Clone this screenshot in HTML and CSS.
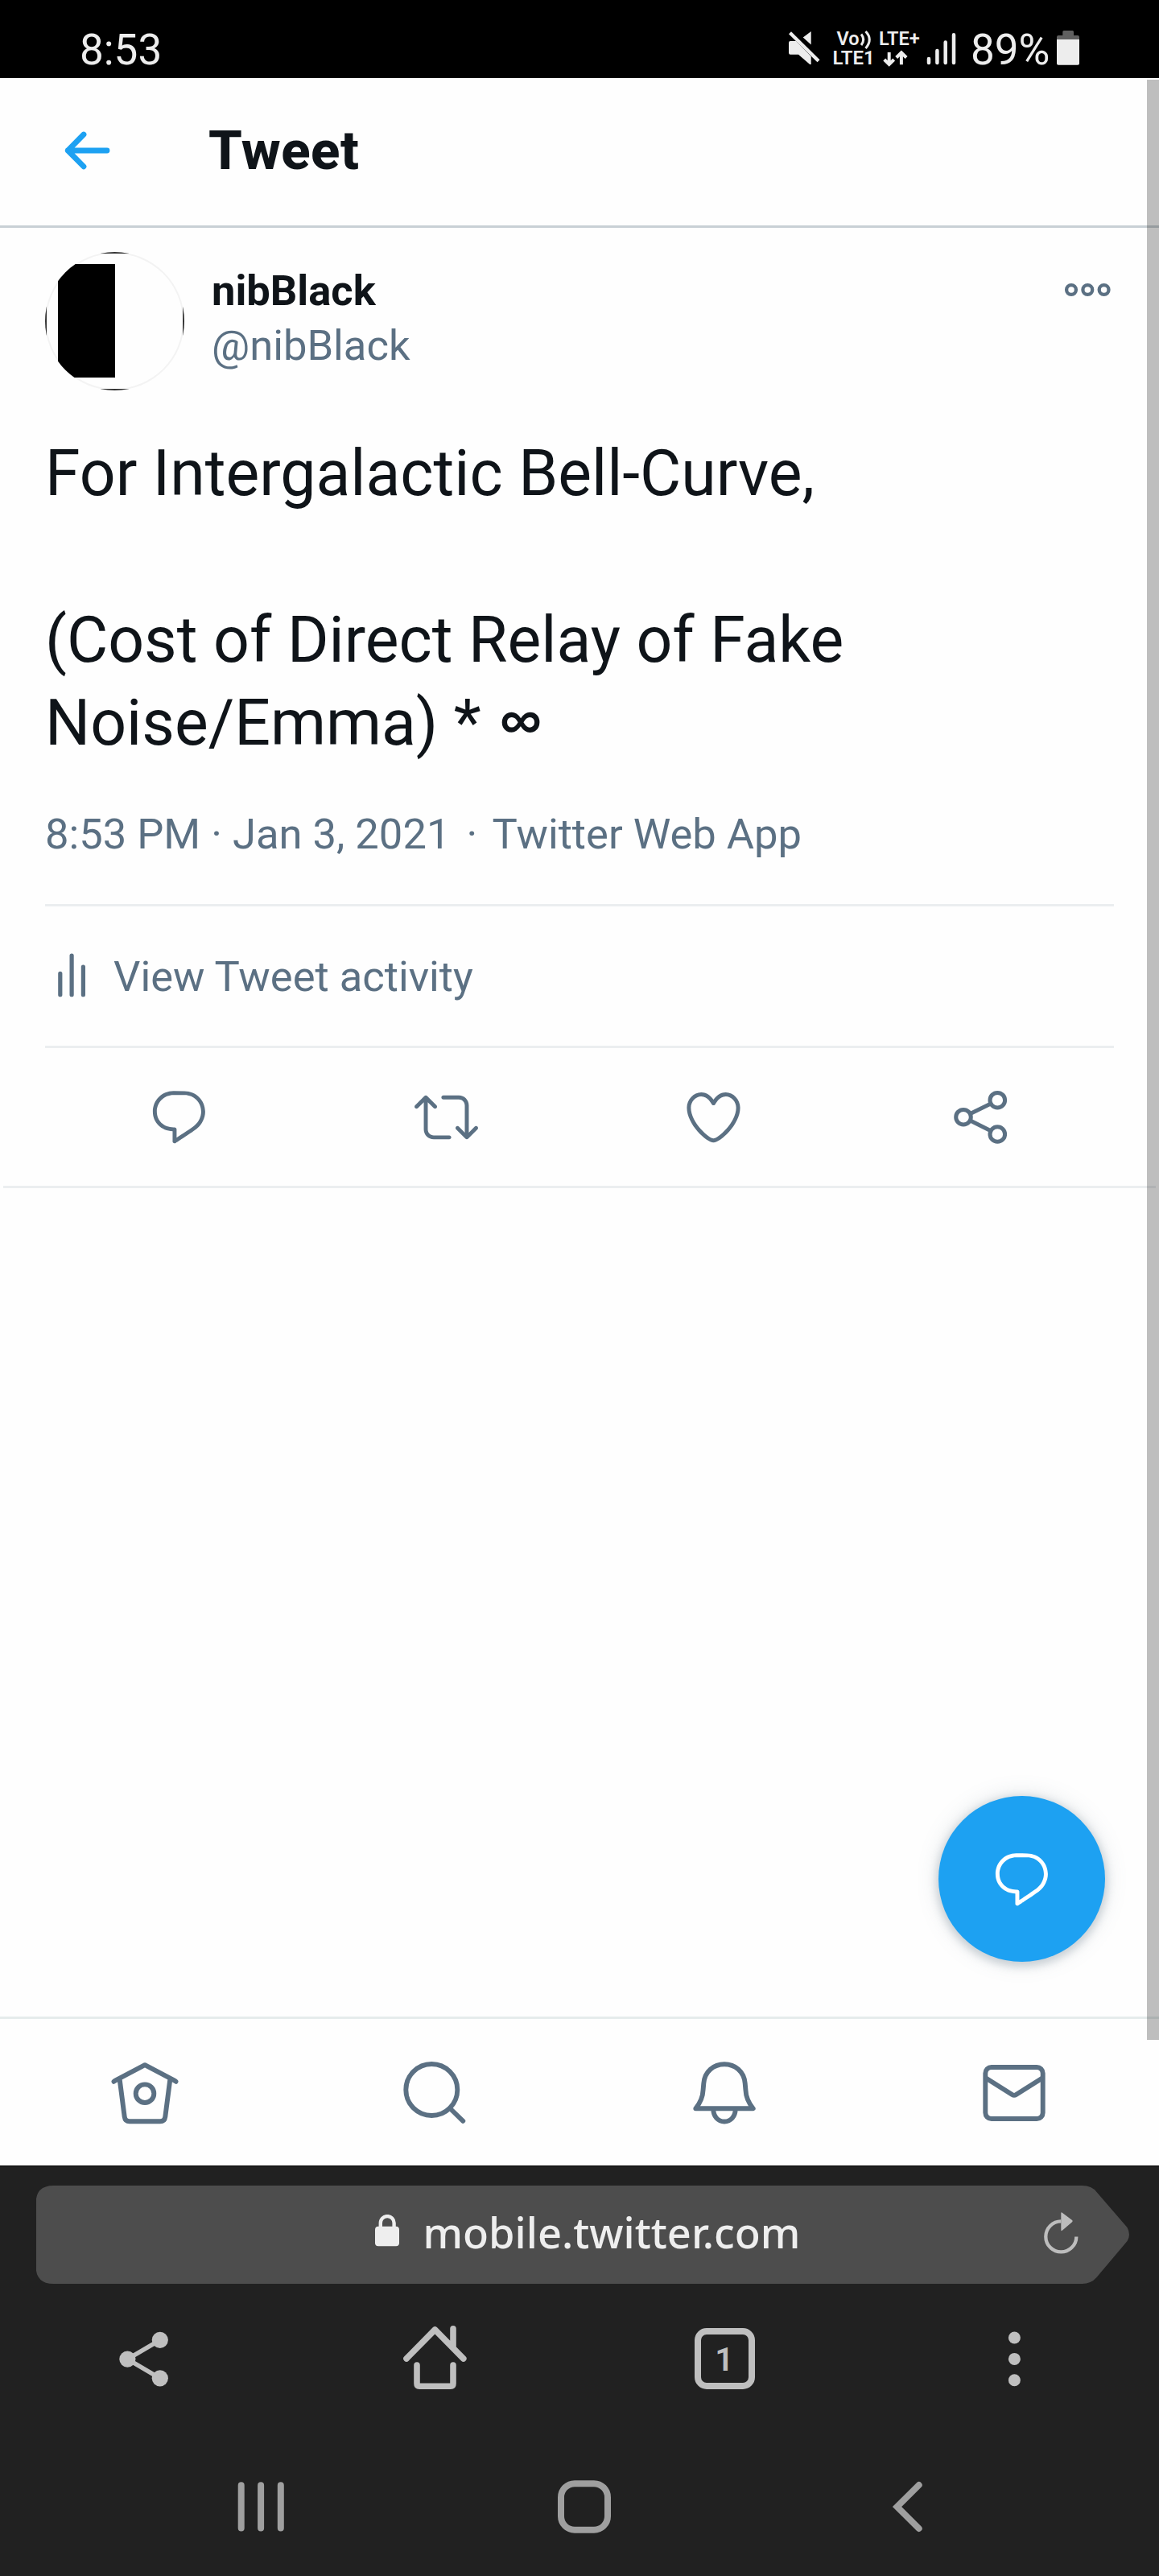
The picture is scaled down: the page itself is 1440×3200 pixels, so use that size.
FILE: index.html
```html
<!DOCTYPE html>
<html lang="en">
<head>
<meta charset="utf-8">
<title>Tweet</title>
<link rel="stylesheet" href="styles.css">
</head>
<body>
<div class="phone">
  <div class="status">
    <span class="status-time">8:53</span>
    <div class="status-right">
      <svg class="status-icons" width="220" height="60" viewBox="976 30 220 60">
        <path d="M980 53q0-2 2-2h7l18.700 19v10l-1.500 0-14.200-12.300h-10q-2 0-2-2zM1007.700 39v16.500l-10-9z"/>
        <path class="slash" d="M981.500 40.800l35.500 35"/>
        <text x="1039.500" y="56.200" font-size="23.500">Vo</text>
        <path class="wave" d="M1070 42.500q5.500 6.500 0 13.500M1075.500 39q9.500 10 0 21"/>
        <text x="1092" y="56.200" font-size="23.500">LTE+</text>
        <text x="1034.500" y="80.300" font-size="24">LTE1</text>
        <path class="arrow" d="M1104.700 65v14.500M1098.700 74l6 6 6-6M1119.900 80.300V66M1113.700 71.500l6.200-6.200 6.200 6.200"/>
        <path class="bars" d="M1154 73v5M1164.400 63v15M1174.700 52.600v25.400M1185 43.200v34.800"/>
      </svg>
      <span class="status-battery">89%</span>
      <svg class="battery" width="28" height="43" viewBox="1313 38 28 43">
        <path fill="#606060" d="M1320.300 44v-4.500q0-1.500 1.500-1.500h10.700q1.500 0 1.500 1.500v4.500h5q2 0 2 2v3h-28v-3q0-2 2-2z"/>
        <path fill="#ededed" d="M1313 49h28v30q0 1.700-2 1.700h-24q-2 0-2-1.700z"/>
      </svg>
    </div>
  </div>

  <div class="app">
    <header class="header">
      <svg class="back" width="58" height="50" viewBox="80 162 58 50"><path d="M104 167L84.300 187L104 206.800M84.300 187H133"/></svg>
      <h1>Tweet</h1>
    </header>

    <article class="tweet">
      <div class="author">
        <div class="avatar"><div class="avatar-block"></div></div>
        <div class="names"><div class="name">nibBlack</div><div class="handle">@nibBlack</div></div>
        <svg class="more" width="58" height="18" viewBox="1322 351 58 18"><circle cx="1331" cy="360" r="5.900"/><circle cx="1351.300" cy="360" r="5.900"/><circle cx="1371.600" cy="360" r="5.900"/></svg>
      </div>
      <p class="text">For Intergalactic Bell-Curve,

(Cost of Direct Relay of Fake
Noise/Emma) * <span class="infinity">∞</span></p>
      <div class="meta"><span>8:53 PM · Jan 3, 2021</span><span class="dot">·</span><span>Twitter Web App</span></div>
      <div class="activity">
        <svg width="66" height="66" viewBox="56 1180 66 66"><path d="M74.800 1209.300v26.400M89.100 1187v48.700M103.400 1201v34.700"/></svg>
        <span>View Tweet activity</span>
      </div>
      <div class="actions">
        <svg class="icon" viewBox="0 0 24 24"><path d="M14.046 2.242l-4.148-.01h-.002c-4.374 0-7.8 3.427-7.8 7.802 0 4.098 3.186 7.206 7.465 7.370v3.828c0 .108.044.286.120.403.142.225.384.347.632.347.138 0 .277-.038.402-.118.264-.168 6.473-4.140 8.088-5.506 1.902-1.610 3.040-3.970 3.043-6.312v-.017c-.006-4.367-3.430-7.787-7.800-7.788zm3.787 12.972c-1.134.960-4.862 3.405-6.772 4.643V16.670c0-.414-.335-.750-.750-.750h-.396c-3.660 0-6.318-2.476-6.318-5.886 0-3.534 2.768-6.302 6.300-6.302l4.147.010h.002c3.532 0 6.300 2.766 6.302 6.296-.003 1.910-.942 3.844-2.514 5.176z"/></svg>
        <svg class="icon" viewBox="0 0 24 24"><path d="M23.770 15.670c-.292-.293-.767-.293-1.060 0l-2.220 2.220V7.650c0-2.068-1.683-3.750-3.750-3.750h-5.850c-.414 0-.750.336-.750.750s.336.750.750.750h5.850c1.240 0 2.250 1.010 2.250 2.250v10.240l-2.220-2.220c-.293-.293-.768-.293-1.060 0s-.294.768 0 1.060l3.500 3.500c.145.147.337.220.530.220s.383-.072.530-.220l3.500-3.500c.294-.292.294-.767 0-1.060zm-10.660 3.280H7.260c-1.240 0-2.250-1.010-2.250-2.250V6.460l2.220 2.220c.148.147.340.220.532.220s.384-.073.530-.220c.293-.293.293-.768 0-1.060l-3.500-3.500c-.293-.294-.768-.294-1.060 0l-3.500 3.500c-.294.292-.294.767 0 1.060s.767.293 1.060 0l2.220-2.220V16.700c0 2.068 1.683 3.750 3.750 3.750h5.850c.414 0 .750-.336.750-.750s-.337-.750-.750-.750z"/></svg>
        <svg class="icon" viewBox="0 0 24 24"><path d="M12 21.638h-.014C9.403 21.590 1.950 14.856 1.950 8.478c0-3.064 2.525-5.754 5.403-5.754 2.290 0 3.830 1.580 4.646 2.730.814-1.148 2.354-2.730 4.645-2.730 2.880 0 5.404 2.690 5.404 5.755 0 6.376-7.454 13.110-10.037 13.157H12zM7.354 4.225c-2.080 0-3.903 1.988-3.903 4.255 0 5.740 7.034 11.596 8.550 11.658 1.518-.062 8.550-5.917 8.550-11.658 0-2.267-1.823-4.255-3.903-4.255-2.528 0-3.940 2.936-3.952 2.965-.230.562-1.156.562-1.387 0-.014-.030-1.425-2.965-3.954-2.965z"/></svg>
        <svg class="icon line" viewBox="1178.500 1348 79 79"><circle cx="1196.500" cy="1387.700" r="9.300"/><circle cx="1238.800" cy="1366.700" r="9.300"/><circle cx="1238.800" cy="1409" r="9.300"/><path d="M1205 1383.500l25.500-12.600M1205 1391.900l25.500 12.800"/></svg>
      </div>
    </article>

    <div class="fab"><svg class="icon" viewBox="0 0 24 24"><path d="M14.046 2.242l-4.148-.01h-.002c-4.374 0-7.8 3.427-7.8 7.802 0 4.098 3.186 7.206 7.465 7.370v3.828c0 .108.044.286.120.403.142.225.384.347.632.347.138 0 .277-.038.402-.118.264-.168 6.473-4.140 8.088-5.506 1.902-1.610 3.040-3.970 3.043-6.312v-.017c-.006-4.367-3.430-7.787-7.800-7.788zm3.787 12.972c-1.134.960-4.862 3.405-6.772 4.643V16.670c0-.414-.335-.750-.750-.750h-.396c-3.660 0-6.318-2.476-6.318-5.886 0-3.534 2.768-6.302 6.300-6.302l4.147.010h.002c3.532 0 6.300 2.766 6.302 6.296-.003 1.910-.942 3.844-2.514 5.176z"/></svg></div>

    <nav class="tabs">
      <svg viewBox="134 2553 92 92"><path d="M141.500 2585.800L143 2584.600L180 2565.200L217 2584.600L218.500 2585.800M148.800 2584L154.700 2629.500Q155.500 2635.300 161 2635.300H199Q204.500 2635.300 205.300 2629.500L211.200 2584"/><circle cx="180" cy="2600.700" r="11.300"/></svg>
      <svg viewBox="494 2553 92 92"><circle cx="536.300" cy="2596" r="32"/><path d="M559.500 2619.500L575.300 2634.800"/></svg>
      <svg viewBox="854 2553 92 92"><path d="M864.300 2619.300C871 2611 873.300 2604 873.600 2596L874.300 2588C875.500 2573 887 2564.200 900 2564.200S924.500 2573 925.700 2588L926.400 2596C926.700 2604 929 2611 935.700 2619.300ZM886.300 2620C886.300 2629 892 2635.500 900 2635.500S913.700 2629 913.700 2620"/></svg>
      <svg viewBox="1214 2553 92 92"><rect x="1224.300" y="2568" width="71.400" height="64" rx="7.500"/><path d="M1225 2581.500L1257.500 2602Q1260 2603.500 1262.500 2602L1295 2581.500"/></svg>
    </nav>
    <div class="scrollbar"></div>
  </div>

  <div class="browser">
    <div class="url">
      <svg class="lock" width="30" height="40" viewBox="466 2751 30 40"><path d="M472.800 2768V2761.500a8.400 8.400 0 0 1 16.800 0V2768" fill="none" stroke="#eee" stroke-width="4.400"/><rect x="466" y="2765.700" width="30" height="24.500" rx="4" fill="#eee"/></svg>
      <span class="host">mobile.twitter.com</span>
      <svg class="reload" width="44" height="54" viewBox="1296 2747 44 54"><path d="M1318.300 2759.400A19 19 0 1 0 1337.300 2778.400" fill="none" stroke="#bdbdbd" stroke-width="4.300"/><path d="M1318.300 2749.500q0-2 1.500-.8l12.300 9.300q1.300 1 0 2.200l-12.300 10.500q-1.500 1.200-1.500-.8z" fill="#bdbdbd"/></svg>
    </div>
    <div class="tools">
      <svg viewBox="135 2885 90 90"><g class="solid"><circle cx="158.400" cy="2930.600" r="10.100"/><circle cx="198.800" cy="2906.800" r="10.100"/><circle cx="198.800" cy="2954.300" r="10.100"/></g><path stroke-width="5.500" d="M198.800 2906.800L158.400 2930.600L198.800 2954.300"/></svg>
      <svg viewBox="495 2885 90 90"><path stroke-width="7.600" d="M505 2930L540.400 2894L575.800 2930M563 2892.700V2916M518 2938V2961Q518 2964.200 521 2964.200H560Q563 2964.200 563 2961V2938"/></svg>
      <div class="tab-count">1</div>
      <svg viewBox="1215 2885 90 90"><g class="solid"><circle cx="1260.400" cy="2904" r="7.500"/><circle cx="1260.400" cy="2930.400" r="7.500"/><circle cx="1260.400" cy="2956.700" r="7.500"/></g></svg>
    </div>
    <div class="system">
      <svg viewBox="278.700 3069 90 90"><path d="M299.400 3087.200V3140.600M323.800 3087.200V3140.600M348.500 3087.200V3140.600"/></svg>
      <svg viewBox="681 3069 90 90"><rect x="697" y="3085.200" width="58" height="57.500" rx="17"/></svg>
      <svg viewBox="1083 3069 90 90"><path d="M1141.700 3087L1114.600 3114L1141.700 3141"/></svg>
    </div>
  </div>
</div>
</body>
</html>
```
FILE: styles.css
```css
* { box-sizing: border-box; }
body { margin: 0; background: #212121; font-family: Roboto, "Noto Sans", sans-serif; }
svg { display: block; flex: none; }
.phone { width: 1440px; height: 3200px; display: flex; flex-direction: column; overflow: hidden; }

.status { height: 97px; padding: 27px 99px 0 99px; display: flex; align-items: center; justify-content: space-between; background: #000; color: #ededed; font-size: 53px; line-height: 62px; }
.status-right { display: flex; align-items: center; }
.status-icons { fill: #ededed; font-weight: 600; margin-top: -4px; }
.status-icons .slash { stroke: #ededed; stroke-width: 4.3; }
.status-icons .wave { fill: none; stroke: #ededed; stroke-width: 3; }
.status-icons .arrow { fill: none; stroke: #ededed; stroke-width: 4; }
.status-icons .bars { fill: none; stroke: #ededed; stroke-width: 4.5; stroke-linecap: round; }
.status-battery { width: 107px; margin-left: 10px; }
.battery { margin-top: -5px; }

.app { position: relative; height: 2593px; display: flex; flex-direction: column; background: #fefefe; color: #0f1419; }
.header { height: 186px; padding: 0 0 3px 80px; display: flex; align-items: center; gap: 121px; border-bottom: 3px solid #c8d0d5; }
.header h1 { margin: 0; font-size: 67px; font-weight: 800; line-height: 84px; letter-spacing: .5px; }
.back { fill: none; stroke: #1da1f2; stroke-width: 6.8; stroke-linecap: round; stroke-linejoin: round; }

.tweet { margin: 0 4px; padding: 30px 52px 0; border-bottom: 3px solid #ebeef0; height: 1193px; }
.author { display: flex; align-items: flex-start; }
.avatar { position: relative; width: 173px; height: 172px; border-radius: 50%; overflow: hidden; padding: 15px 0 0 16px; background: #fefefe; box-shadow: inset 0 0 0 2px #f3f3f3; }
/* The photo has a thin dark frame that shows only where the circle touches its edges. */
.avatar::before { content: ""; position: absolute; inset: 0; border: 2px solid #333; }
.avatar-block { width: 71px; height: 141px; background: #000; }
.names { flex: 1; padding: 14px 0 0 34px; font-size: 52.5px; line-height: 68px; }
.name { font-weight: 700; }
.handle, .meta, .activity { color: #5b7083; }
.more { margin: 38px 4px 0 0; fill: none; stroke: #5b7083; stroke-width: 4.3; }
.text { margin: 52px 0 0; height: 414px; font-size: 78.75px; line-height: 103.36px; white-space: pre-line; }
.infinity { margin-left: 2px; font-family: "Open Sans", sans-serif; font-weight: 600; line-height: 1; }
.meta { margin-top: 51px; height: 121px; font-size: 52.5px; line-height: 69px; }
.dot { padding: 0 18.5px 0 20px; }
.activity { height: 179px; padding-top: 1px; display: flex; align-items: center; gap: 19px; border: solid #ebeef0; border-width: 3px 0; font-size: 52.5px; line-height: 69px; }
.activity svg { fill: none; stroke: #5b7083; stroke-width: 5.2; stroke-linecap: round; }
.actions { height: 171px; display: grid; grid-template-columns: repeat(4, 1fr); align-items: center; justify-items: center; }
.icon { width: 79px; height: 79px; fill: #5b7083; }
.icon.line { fill: none; stroke: #5b7083; stroke-width: 5; }

.fab { position: absolute; left: 1166px; top: 2134px; width: 207px; height: 206px; border-radius: 50%; display: flex; align-items: center; justify-content: center; background: #1da1f2; box-shadow: 0 0 28px rgba(101,119,134,.2), 0 3.5px 10px 3px rgba(101,119,134,.25); }
.fab .icon { fill: #fff; }

.tabs { height: 185px; margin-top: auto; border-top: 3px solid #e6ecec; display: grid; grid-template-columns: repeat(4, 1fr); align-items: center; justify-items: center; }
.tabs svg { width: 92px; height: 92px; fill: none; stroke: #5b7083; stroke-width: 5.9; stroke-linecap: round; stroke-linejoin: round; }
.scrollbar { position: absolute; right: 0; top: 2px; width: 15px; height: 2435px; background: rgba(0,0,0,.25); }

.browser { flex: 1; border-top: 2px solid #191919; background: #212121; }
.url { width: 1359px; height: 122px; margin: 23px 0 0 44.5px; padding-left: 421px; display: flex; align-items: center; background: #4d4d4d; color: #eee; font-family: "Noto Sans", sans-serif; font-size: 52.4px; font-weight: 500; line-height: 72px; clip-path: path("M22 0H1300Q1312 0 1318 8L1356 52Q1361 61 1356 69L1318 114Q1311 122 1300 122H22Q0 122 0 100V22Q0 0 22 0Z"); }
.host { padding-bottom: 6px; }
.lock { margin: -10px 30px 0 0; }
.reload { margin: -4px 64px 0 auto; }
.tools { height: 185px; display: grid; grid-template-columns: repeat(4, 1fr); align-items: center; justify-items: center; }
.tools svg { width: 90px; height: 90px; fill: none; stroke: #bfbfbf; stroke-linecap: round; stroke-linejoin: round; }
.tools .solid { fill: #bfbfbf; stroke: none; }
.tab-count { width: 75px; height: 76px; border: 8px solid #bfbfbf; border-radius: 15px; color: #bfbfbf; font-size: 41px; font-weight: 600; line-height: 62px; text-align: center; }
.system { height: 90px; margin: 47px 267px 0 278.7px; display: flex; justify-content: space-between; }
.system svg { width: 90px; height: 90px; fill: none; stroke: #9f9f9f; stroke-width: 8; stroke-linecap: round; }
```
